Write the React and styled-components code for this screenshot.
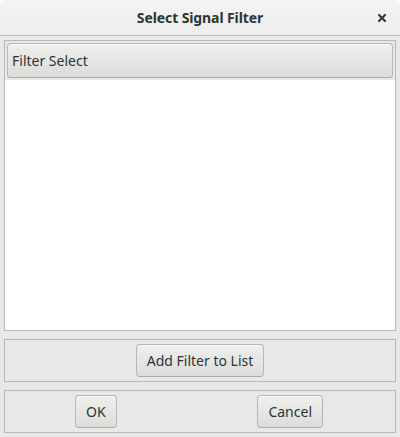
import React from "react";
import styled, { createGlobalStyle } from "styled-components";

const Global = createGlobalStyle`
  html, body { margin: 0; padding: 0; background: #ffffff; }
  body { font-family: "Noto Sans", "DejaVu Sans", sans-serif; color: #2e3436; }
  * { box-sizing: border-box; }
`;

const Window = styled.div`
  width: 400px;
  height: 437px;
  background: #e8e8e7;
  border-radius: 8px 8px 0 0;
  overflow: hidden;
  display: flex;
  flex-direction: column;
`;

const TitleBar = styled.div`
  height: 36px;
  flex: none;
  position: relative;
  display: flex;
  align-items: center;
  justify-content: center;
  background: linear-gradient(to bottom, #f4f4f4, #ededed);
  border-bottom: 1px solid #bfbfbc;
`;

const Title = styled.div`
  font-size: 14px;
  font-weight: 700;
  color: #2e3436;
  letter-spacing: -0.1px;
  padding-bottom: 1px;
`;

const CloseButton = styled.div`
  position: absolute;
  right: 14px;
  top: 14px;
  width: 8px;
  height: 8px;
  display: flex;
`;

const Content = styled.div`
  flex: 1;
  display: flex;
  flex-direction: column;
  gap: 8px;
  padding: 4px;
  min-height: 0;
`;

const ListFrame = styled.div`
  flex: 1;
  border: 1px solid #b8b8b5;
  display: flex;
  flex-direction: column;
  background: #ffffff;
`;

const HeaderRow = styled.div`
  background: #e8e8e7;
  padding: 2px;
`;

const Button = styled.div`
  display: flex;
  align-items: center;
  justify-content: ${(p) => (p.$left ? "flex-start" : "center")};
  height: ${(p) => p.$h || 33}px;
  padding: 0 ${(p) => p.$px ?? 10}px;
  font-size: 14px;
  color: #2e3436;
  white-space: nowrap;
  border: 1px solid #b6b6b3;
  border-bottom-color: #a8a8a5;
  border-radius: 4px;
  background: linear-gradient(to bottom, #efefee, #dcdcda);
  box-shadow: inset 0 1px rgba(255, 255, 255, 0.8);
`;

const ListBody = styled.div`
  flex: 1;
  background: #ffffff;
`;

const Frame = styled.div`
  flex: none;
  height: 43px;
  border: 1px solid #b8b8b5;
  display: flex;
  align-items: center;
  justify-content: ${(p) => p.$justify || "center"};
  padding: ${(p) => p.$pad || "0"};
`;

export default function App() {
  return (
    <>
      <Global />
      <Window>
        <TitleBar>
          <Title>Select Signal Filter</Title>
          <CloseButton>
            <svg width="8" height="8" viewBox="0 0 8 8">
              <path d="M1 1 L7 7 M7 1 L1 7" stroke="#2e3436" strokeWidth="2" strokeLinecap="square" />
            </svg>
          </CloseButton>
        </TitleBar>
        <Content>
          <ListFrame>
            <HeaderRow>
              <Button $left $h={35} $px={4}>Filter Select</Button>
            </HeaderRow>
            <ListBody />
          </ListFrame>
          <Frame>
            <Button>Add Filter to List</Button>
          </Frame>
          <Frame $justify="space-between" $pad="0 72px 0 70px">
            <Button>OK</Button>
            <Button>Cancel</Button>
          </Frame>
        </Content>
      </Window>
    </>
  );
}
